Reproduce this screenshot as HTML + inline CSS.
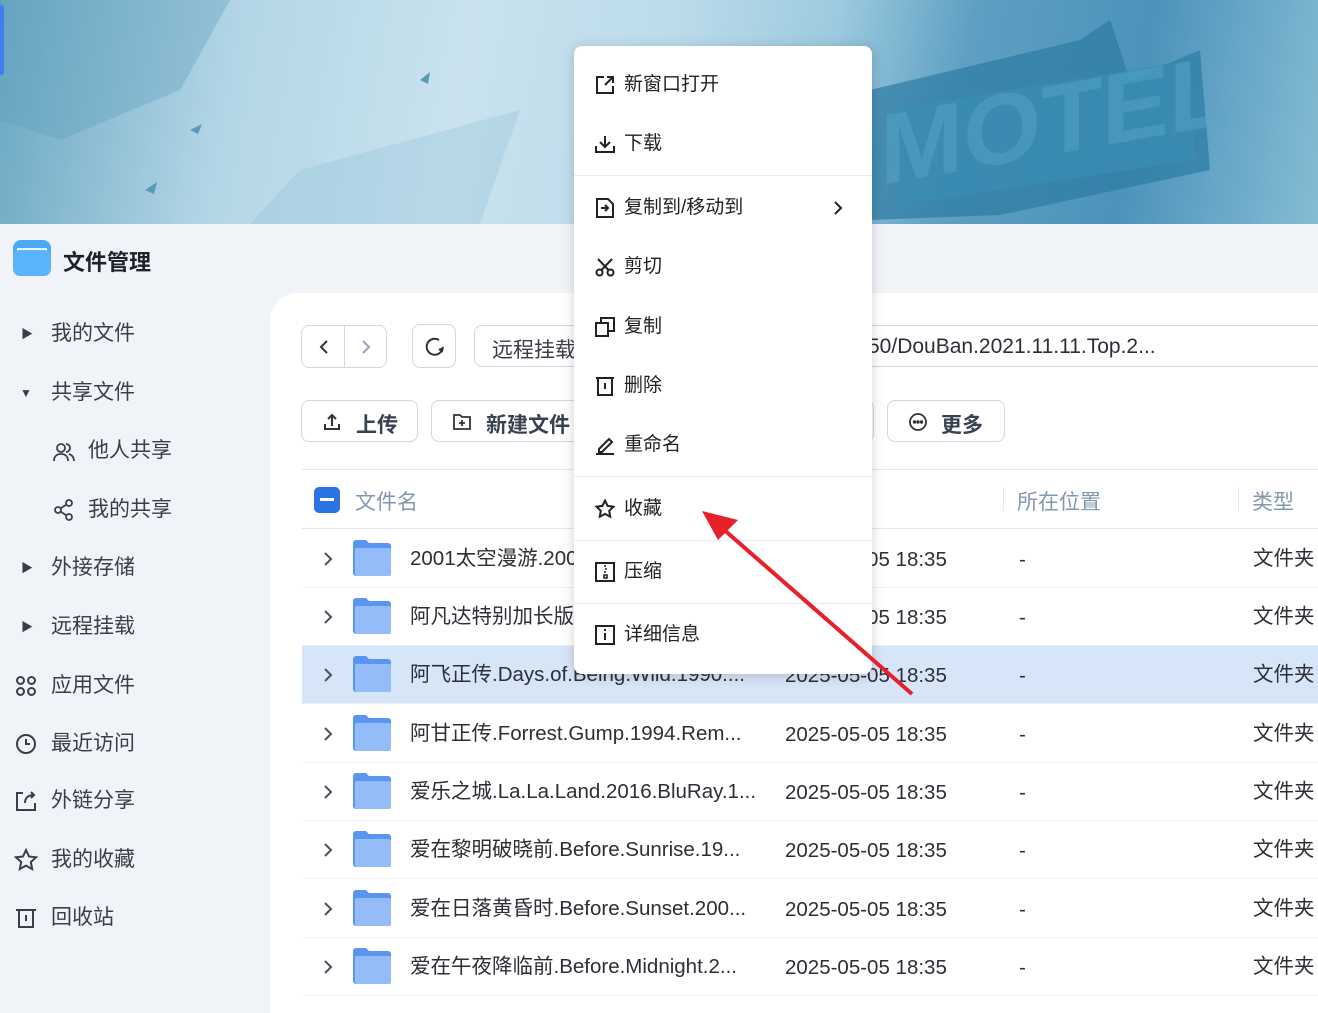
<!DOCTYPE html>
<html><head><meta charset="utf-8"><style>
*{margin:0;padding:0;box-sizing:border-box}
body{width:1318px;height:994px;overflow:hidden;position:relative;background:#f0f4f9;font-family:"Liberation Sans","Noto Sans CJK SC",sans-serif;color:#333}
.banner{position:absolute;left:0;top:0;width:1318px;height:224px;background:linear-gradient(100deg,#6aa7c2 0%,#b3d6e6 18%,#c9e2ee 35%,#bcdbea 50%,#9ccadf 62%,#5e9fc2 72%,#4b93ba 85%,#86bcd4 100%);overflow:hidden}
.abs{position:absolute}
.side{position:absolute;left:0;font-size:21px;color:#3a3f47;height:30px;line-height:30px}
.main{position:absolute;left:270px;top:293px;width:1060px;height:720px;background:#fff;border-top-left-radius:28px}
.btn{position:absolute;border:1px solid #cfd8e3;border-radius:8px;background:#fff}
.row{position:absolute;left:302px;width:1020px;height:58px;border-bottom:1px solid #edf0f4;font-size:20.5px;color:#2c2f36}
.row span{position:absolute;top:14px;line-height:30px;white-space:nowrap}
.menu{position:absolute;left:574px;top:46px;width:298px;height:628px;background:#fff;border-radius:8px;box-shadow:0 2px 12px rgba(0,0,0,.18)}
.mi{position:absolute;left:0;width:298px;height:30px;font-size:19px;color:#222;line-height:30px}
.mi svg{position:absolute;left:21px;top:5px}
.mi span{position:absolute;left:50px}
.hr{position:absolute;left:0;width:298px;height:1px;background:#e8ebef}
</style></head><body>
<div class="banner">
<svg width="1318" height="224" style="position:absolute;left:0;top:0">
<path d="M0 0 L230 0 L180 90 L60 140 L0 120Z" fill="#5e9ebd" opacity=".35"/>
<path d="M300 170 L520 110 L480 224 L250 224Z" fill="#8fc0d6" opacity=".3"/>
<path d="M870 90 L1080 40 L1110 20 L1130 80 L1200 50 L1210 170 L1000 215 L870 220Z" fill="#2c7ba3" opacity=".7"/>
<path d="M890 110 L1190 60 L1195 160 L900 205Z" fill="#3a8db4" opacity=".7"/>
<text x="880" y="190" font-size="100" font-family="Liberation Sans" font-weight="bold" fill="#5aa7c9" transform="skewY(-10) translate(0,150)" opacity=".45">MOTEL</text>
<g fill="#5b9ab6"><path d="M190 130l12-6-4 10z"/><path d="M145 190l12-8-3 12z"/><path d="M420 80l10-8-2 12z"/></g>
</svg>
<div class="abs" style="left:0;top:5px;width:4px;height:70px;background:#3f7ef2;border-radius:0 3px 3px 0"></div>
</div>
<svg class="abs" style="left:12px;top:238px" width="40" height="40"><rect x="1" y="2" width="38" height="36" rx="8" fill="#4aa8f8"/><path d="M5 10h30v4H5z" fill="#fff" opacity=".9"/><rect x="1" y="12" width="38" height="26" rx="7" fill="#5bb3fa"/></svg>
<div class="abs" style="left:63px;top:245px;font-size:22px;font-weight:bold;color:#1f2329">文件管理</div>

<div class="side" style="top:319px;left:21px;font-size:12px">▶</div><div class="side" style="top:319px;left:51px">我的文件</div>
<div class="side" style="top:378px;left:20px;font-size:12px">▼</div><div class="side" style="top:378px;left:51px">共享文件</div>
<svg class="abs" style="left:53px;top:441px" width="22" height="22" fill="none" stroke="#3a3f47" stroke-width="1.8"><circle cx="8" cy="7" r="4"/><path d="M1 20c0-5 3-7 7-7s7 2 7 7"/><path d="M13 3a4 4 0 010 8M16 13c3 1 5 3 5 7"/></svg>
<div class="side" style="top:436px;left:88px">他人共享</div>
<svg class="abs" style="left:53px;top:499px" width="22" height="22" fill="none" stroke="#3a3f47" stroke-width="1.8"><circle cx="5" cy="11" r="3"/><circle cx="16" cy="4" r="3"/><circle cx="16" cy="18" r="3"/><path d="M7.5 9.5l6-4M7.5 12.5l6 4"/></svg>
<div class="side" style="top:495px;left:88px">我的共享</div>
<div class="side" style="top:553px;left:21px;font-size:12px">▶</div><div class="side" style="top:553px;left:51px">外接存储</div>
<div class="side" style="top:612px;left:21px;font-size:12px">▶</div><div class="side" style="top:612px;left:51px">远程挂载</div>
<svg class="abs" style="left:15px;top:675px" width="22" height="22" fill="none" stroke="#3a3f47" stroke-width="2"><circle cx="5.5" cy="5.5" r="3.5"/><circle cx="16.5" cy="5.5" r="3.5"/><circle cx="5.5" cy="16.5" r="3.5"/><circle cx="16.5" cy="16.5" r="3.5"/></svg>
<div class="side" style="top:671px;left:51px">应用文件</div>
<svg class="abs" style="left:15px;top:733px" width="22" height="22" fill="none" stroke="#3a3f47" stroke-width="2"><circle cx="11" cy="11" r="9"/><path d="M11 6v5h4"/></svg>
<div class="side" style="top:729px;left:51px">最近访问</div>
<svg class="abs" style="left:15px;top:790px" width="22" height="22" fill="none" stroke="#3a3f47" stroke-width="2"><path d="M8 3H2v17h18v-7"/><path d="M10 13c0-5 3-8 9-8M16 2l3 3-3 3"/></svg>
<div class="side" style="top:786px;left:51px">外链分享</div>
<svg class="abs" style="left:14px;top:848px" width="24" height="24" fill="none" stroke="#3a3f47" stroke-width="2"><path d="M12 2l3 6.5 7 .8-5.2 4.8 1.4 7L12 17.6 5.8 21l1.4-7L2 9.3l7-.8z"/></svg>
<div class="side" style="top:845px;left:51px">我的收藏</div>
<svg class="abs" style="left:15px;top:907px" width="22" height="22" fill="none" stroke="#3a3f47" stroke-width="2"><path d="M1 3h20M4 3v17h14V3M11 8v6"/></svg>
<div class="side" style="top:903px;left:51px">回收站</div>

<div class="main"></div>
<div class="btn" style="left:301px;top:325px;width:86px;height:43px"><div class="abs" style="left:42px;top:0;width:1px;height:41px;background:#cfd8e3"></div>
<svg class="abs" style="left:15px;top:12px" width="16" height="18" fill="none" stroke="#333" stroke-width="2"><path d="M10 3l-6 6 6 6"/></svg>
<svg class="abs" style="left:56px;top:12px" width="16" height="18" fill="none" stroke="#9aa7b8" stroke-width="2"><path d="M5 3l6 6-6 6"/></svg></div>
<div class="btn" style="left:412px;top:324px;width:44px;height:44px"><svg class="abs" style="left:10px;top:10px" width="24" height="24" fill="none" stroke="#333" stroke-width="2"><path d="M19 15A8 8 0 1116 5"/><path d="M20 12l-1 4-3-2" fill="#333"/></svg></div>
<div class="btn" style="left:474px;top:325px;width:860px;height:42px;border-radius:8px"></div>
<div class="abs" style="left:492px;top:334px;font-size:21px;color:#3a3f47">远程挂载</div>
<div class="abs" style="left:868px;top:335px;font-size:21px;color:#2c2f36">50/DouBan.2021.11.11.Top.2...</div>
<div class="btn" style="left:301px;top:400px;width:117px;height:42px"><svg class="abs" style="left:20px;top:11px" width="20" height="20" fill="none" stroke="#333" stroke-width="2"><path d="M10 14V3M6 7l4-4 4 4M3 12v5h14v-5"/></svg><div class="abs" style="left:54px;top:8px;font-size:21px;font-weight:bold;color:#3a4150">上传</div></div>
<div class="btn" style="left:431px;top:400px;width:150px;height:42px"><svg class="abs" style="left:20px;top:12px" width="20" height="18" fill="none" stroke="#333" stroke-width="1.8"><path d="M2 2h6l2 2h8v12H2z M10 7v6M7 10h6"/></svg><div class="abs" style="left:54px;top:8px;font-size:21px;font-weight:bold;color:#3a4150">新建文件</div></div>
<div class="btn" style="left:830px;top:400px;width:44px;height:42px"></div>
<div class="btn" style="left:887px;top:400px;width:118px;height:42px"><svg class="abs" style="left:20px;top:11px" width="20" height="20" fill="none" stroke="#333" stroke-width="1.8"><circle cx="10" cy="10" r="8"/><circle cx="6.5" cy="10" r=".8" fill="#333"/><circle cx="10" cy="10" r=".8" fill="#333"/><circle cx="13.5" cy="10" r=".8" fill="#333"/></svg><div class="abs" style="left:53px;top:8px;font-size:21px;font-weight:bold;color:#3a4150">更多</div></div>
<div class="abs" style="left:302px;top:469px;width:1020px;height:1px;background:#e3e8ee"></div>
<div class="abs" style="left:302px;top:528px;width:1020px;height:1px;background:#e3e8ee"></div>
<div class="abs" style="left:314px;top:487px;width:26px;height:26px;background:#2b74e4;border-radius:5px"><div class="abs" style="left:6px;top:11px;width:14px;height:3px;background:#fff"></div></div>
<div class="abs" style="left:355px;top:486px;font-size:21px;color:#8497b0">文件名</div>
<div class="abs" style="left:1003px;top:487px;width:1px;height:24px;background:#e3e8ee"></div>
<div class="abs" style="left:1017px;top:486px;font-size:21px;color:#8497b0">所在位置</div>
<div class="abs" style="left:1238px;top:487px;width:1px;height:24px;background:#e3e8ee"></div>
<div class="abs" style="left:1252px;top:486px;font-size:21px;color:#8497b0">类型</div>

<div id="rows"></div>
<script>
var names=["2001太空漫游.2001.a.Space.Odyss...","阿凡达特别加长版.Avatar.2009.Ext...","阿飞正传.Days.of.Being.Wild.1990....","阿甘正传.Forrest.Gump.1994.Rem...","爱乐之城.La.La.Land.2016.BluRay.1...","爱在黎明破晓前.Before.Sunrise.19...","爱在日落黄昏时.Before.Sunset.200...","爱在午夜降临前.Before.Midnight.2..."];
var tops=[530,588,646,705,763,821,880,938],h="";
for(var i=0;i<8;i++){h+='<div class="row" style="top:'+tops[i]+'px;'+(i==2?'background:#d7e5f8;':'')+'">'+
'<svg style="position:absolute;left:20px;top:21px" width="12" height="16" fill="none" stroke="#4a5160" stroke-width="2"><path d="M3 2l6 6-6 6"/></svg>'+
'<svg style="position:absolute;left:50px;top:9px" width="40" height="38"><path d="M1 4a3 3 0 013-3h10l3 3h19a3 3 0 013 3v27a3 3 0 01-3 3H4a3 3 0 01-3-3z" fill="#5a96f0"/><rect x="3" y="9" width="36" height="28" rx="2" fill="#93bcf8"/></svg>'+
'<span style="left:108px">'+names[i]+'</span><span style="left:483px;top:15px">2025-05-05 18:35</span><span style="left:717px;top:15px">-</span><span style="left:951px">文件夹</span></div>';}
document.getElementById('rows').innerHTML=h;
</script>

<div class="menu">
<div class="mi" style="top:24px"><svg width="20" height="20" fill="none" stroke="#222" stroke-width="2"><path d="M9 2H2v16h16v-7M12 2h6v6M18 2l-8 8"/></svg><span>新窗口打开</span></div>
<div class="mi" style="top:83px"><svg width="20" height="20" fill="none" stroke="#222" stroke-width="2"><path d="M10 2v11M5 8l5 5 5-5M1 12v6h18v-6"/></svg><span>下载</span></div>
<div class="hr" style="top:129px"></div>
<div class="mi" style="top:147px"><svg width="20" height="20" fill="none" stroke="#222" stroke-width="2"><path d="M2 1h11l5 5v13H2z M6 10h7M10 7l3 3-3 3"/></svg><span>复制到/移动到</span><svg style="left:258px;top:7px" width="12" height="16" fill="none" stroke="#222" stroke-width="2"><path d="M3 2l6 6-6 6"/></svg></div>
<div class="mi" style="top:206px"><svg width="20" height="20" fill="none" stroke="#222" stroke-width="2"><circle cx="4.5" cy="15.5" r="3"/><circle cx="15.5" cy="15.5" r="3"/><path d="M6.5 13L17 2M13.5 13L3 2"/></svg><span>剪切</span></div>
<div class="mi" style="top:266px"><svg width="20" height="20" fill="none" stroke="#222" stroke-width="2"><rect x="1" y="6" width="12" height="13"/><path d="M6 6V1h13v13h-6"/></svg><span>复制</span></div>
<div class="mi" style="top:325px"><svg width="20" height="20" fill="none" stroke="#222" stroke-width="2"><path d="M1 2h18M3 2v17h14V2M10 7v6"/></svg><span>删除</span></div>
<div class="mi" style="top:384px"><svg width="20" height="20" fill="none" stroke="#222" stroke-width="2"><path d="M4 14l10-10 3 3-10 10H4z M1 19h18"/></svg><span>重命名</span></div>
<div class="hr" style="top:430px"></div>
<div class="mi" style="top:448px"><svg width="20" height="20" fill="none" stroke="#222" stroke-width="2"><path d="M10 1.5l2.6 5.4 5.9.8-4.3 4.1 1 5.9L10 14.9l-5.2 2.8 1-5.9L1.5 7.7l5.9-.8z"/></svg><span>收藏</span></div>
<div class="hr" style="top:494px"></div>
<div class="mi" style="top:511px"><svg width="20" height="20" fill="none" stroke="#222" stroke-width="2"><rect x="1" y="1" width="18" height="18"/><path d="M9 4h2M10 7h2M9 10h2M9 13h3v3H9z" stroke-width="1.6"/></svg><span>压缩</span></div>
<div class="hr" style="top:557px"></div>
<div class="mi" style="top:574px"><svg width="20" height="20" fill="none" stroke="#222" stroke-width="2"><rect x="1" y="1" width="18" height="18"/><path d="M10 8v7M10 4v2"/></svg><span>详细信息</span></div>
</div>

<svg class="abs" style="left:0;top:0;pointer-events:none" width="1318" height="994">
<line x1="912" y1="694" x2="722" y2="528" stroke="#e8202a" stroke-width="4"/>
<path d="M702 511 L738 520 L718 540 Z" fill="#e8202a"/>
</svg>
</body></html>
